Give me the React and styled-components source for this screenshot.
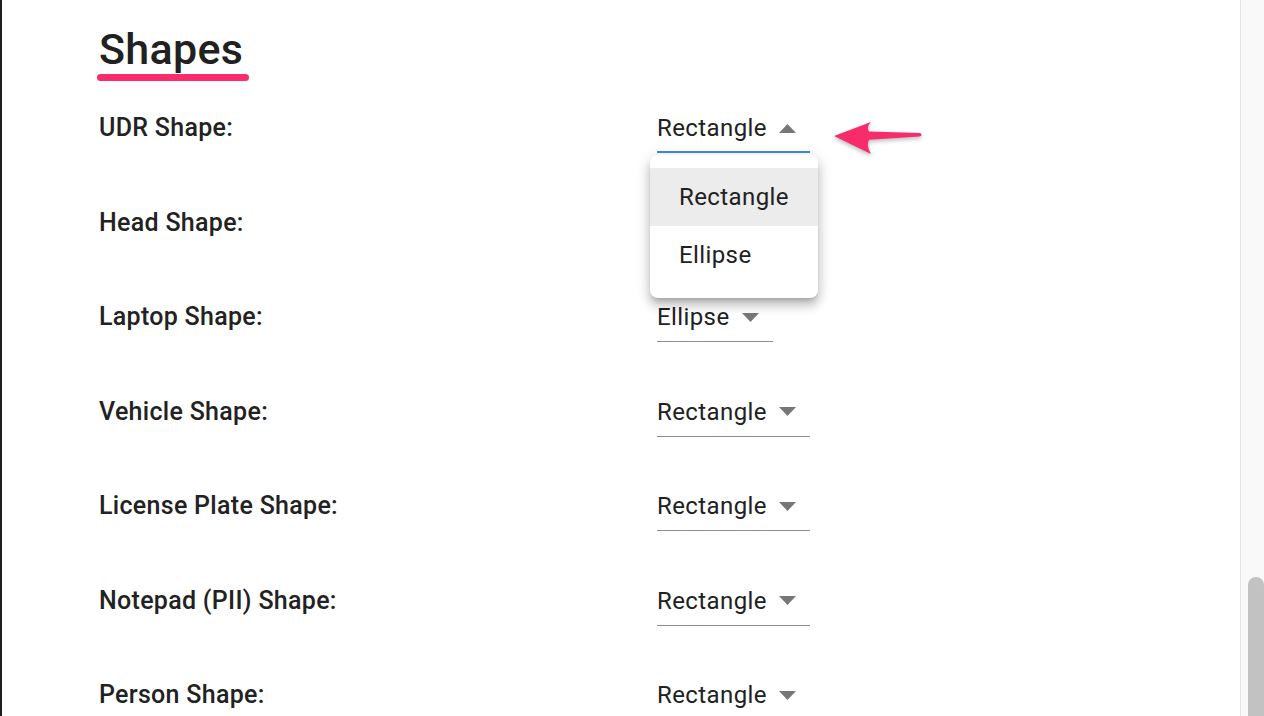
import React from "react";
import styled, { createGlobalStyle } from "styled-components";

const GlobalStyle = createGlobalStyle`
  html, body {
    margin: 0;
    padding: 0;
    background: #ffffff;
    overflow: hidden;
  }
  body {
    font-family: Roboto, "Liberation Sans", sans-serif;
    color: #212121;
  }
`;

const Page = styled.div`
  display: flex;
  height: 716px;
  border-left: 2px solid #1e1c1d;
`;

const Main = styled.main`
  flex: 1;
  padding-left: 97px;
`;

const Title = styled.h1`
  margin: 28px 0 0;
  font-size: 43px;
  line-height: 43px;
  font-weight: 500;
  letter-spacing: 0.3px;
  color: #212121;
`;

const TitleBar = styled.div`
  width: 152px;
  height: 7px;
  margin: 3px 0 0 -2px;
  border-radius: 4px;
  background: #fb2c6c;
`;

const Rows = styled.div`
  margin-top: 33px;
`;

const Row = styled.div`
  display: grid;
  grid-template-columns: 558px auto;
  align-items: baseline;
  height: 94.5px;
`;

const Label = styled.div`
  font-size: 25px;
  line-height: 28px;
  font-weight: 500;
  letter-spacing: 0.3px;
  color: #222222;
`;

const SelectWrap = styled.div`
  position: relative;
  justify-self: start;
`;

const Select = styled.div`
  display: inline-flex;
  align-items: center;
  gap: 12px;
  padding: 0 14px ${(p) => (p.$open ? "9px" : "10px")} 0;
  border-bottom: ${(p) => (p.$open ? "2px solid #3d8be0" : "1px solid #8e8e8e")};
  font-size: 24px;
  line-height: 28px;
  letter-spacing: 0.4px;
  color: #212121;
`;

const Caret = styled.svg`
  width: 17px;
  height: 9px;
  flex: none;
`;

const Menu = styled.ul`
  position: absolute;
  top: 41px;
  left: -7px;
  width: 168px;
  margin: 0;
  padding: 13px 0 14px;
  list-style: none;
  background: #ffffff;
  border-radius: 8px;
  box-shadow: 0 5px 5px -3px rgba(0, 0, 0, 0.2),
    0 8px 10px 1px rgba(0, 0, 0, 0.14), 0 3px 14px 2px rgba(0, 0, 0, 0.12);
  z-index: 2;
`;

const MenuItem = styled.li`
  height: 58px;
  line-height: 58px;
  padding-left: 29px;
  font-size: 24px;
  letter-spacing: 0.4px;
  color: #212121;
  background: ${(p) => (p.$selected ? "#ececec" : "transparent")};
`;

const Pointer = styled.svg`
  position: absolute;
  left: 174px;
  top: 3px;
  width: 96px;
  height: 42px;
  overflow: visible;
  filter: drop-shadow(0 2px 2px rgba(0, 0, 0, 0.28));
`;

const Track = styled.aside`
  width: 23px;
  display: flex;
  flex-direction: column;
  background: #f9f9f9;
  border-left: 1px solid #e4e4e4;
`;

const Thumb = styled.div`
  flex: 1;
  margin: 577px 0 0 7px;
  border-radius: 8px 8px 0 0;
  background: #c2c2c2;
`;

const fields = [
  { label: "UDR Shape:", value: "Rectangle", open: true },
  { label: "Head Shape:", value: null },
  { label: "Laptop Shape:", value: "Ellipse" },
  { label: "Vehicle Shape:", value: "Rectangle" },
  { label: "License Plate Shape:", value: "Rectangle" },
  { label: "Notepad (PII) Shape:", value: "Rectangle" },
  { label: "Person Shape:", value: "Rectangle" },
];

const CaretIcon = ({ up }) => (
  <Caret viewBox="0 0 17 9">
    <path d={up ? "M0 9 L8.5 0 L17 9 Z" : "M0 0 L8.5 9 L17 0 Z"} fill="#777777" />
  </Caret>
);

const ShapeSelect = ({ value, open }) => (
  <SelectWrap>
    <Select $open={open}>
      <span>{value}</span>
      <CaretIcon up={open} />
    </Select>
    {open && (
      <>
        <Menu>
          <MenuItem $selected>Rectangle</MenuItem>
          <MenuItem>Ellipse</MenuItem>
        </Menu>
        <Pointer viewBox="0 0 96 42">
          <path
            d="M3 19 L40 5 Q35 10 38 14.5 L89 16 Q92 17.5 89 19.5 L38 22.8 Q35 29 40 37 Z"
            fill="#f72d6b"
          />
        </Pointer>
      </>
    )}
  </SelectWrap>
);

const App = () => (
  <Page>
    <GlobalStyle />
    <Main>
      <Title>Shapes</Title>
      <TitleBar />
      <Rows>
        {fields.map((f) => (
          <Row key={f.label}>
            <Label>{f.label}</Label>
            {f.value ? <ShapeSelect value={f.value} open={f.open} /> : <span />}
          </Row>
        ))}
      </Rows>
    </Main>
    <Track>
      <Thumb />
    </Track>
  </Page>
);

export default App;
